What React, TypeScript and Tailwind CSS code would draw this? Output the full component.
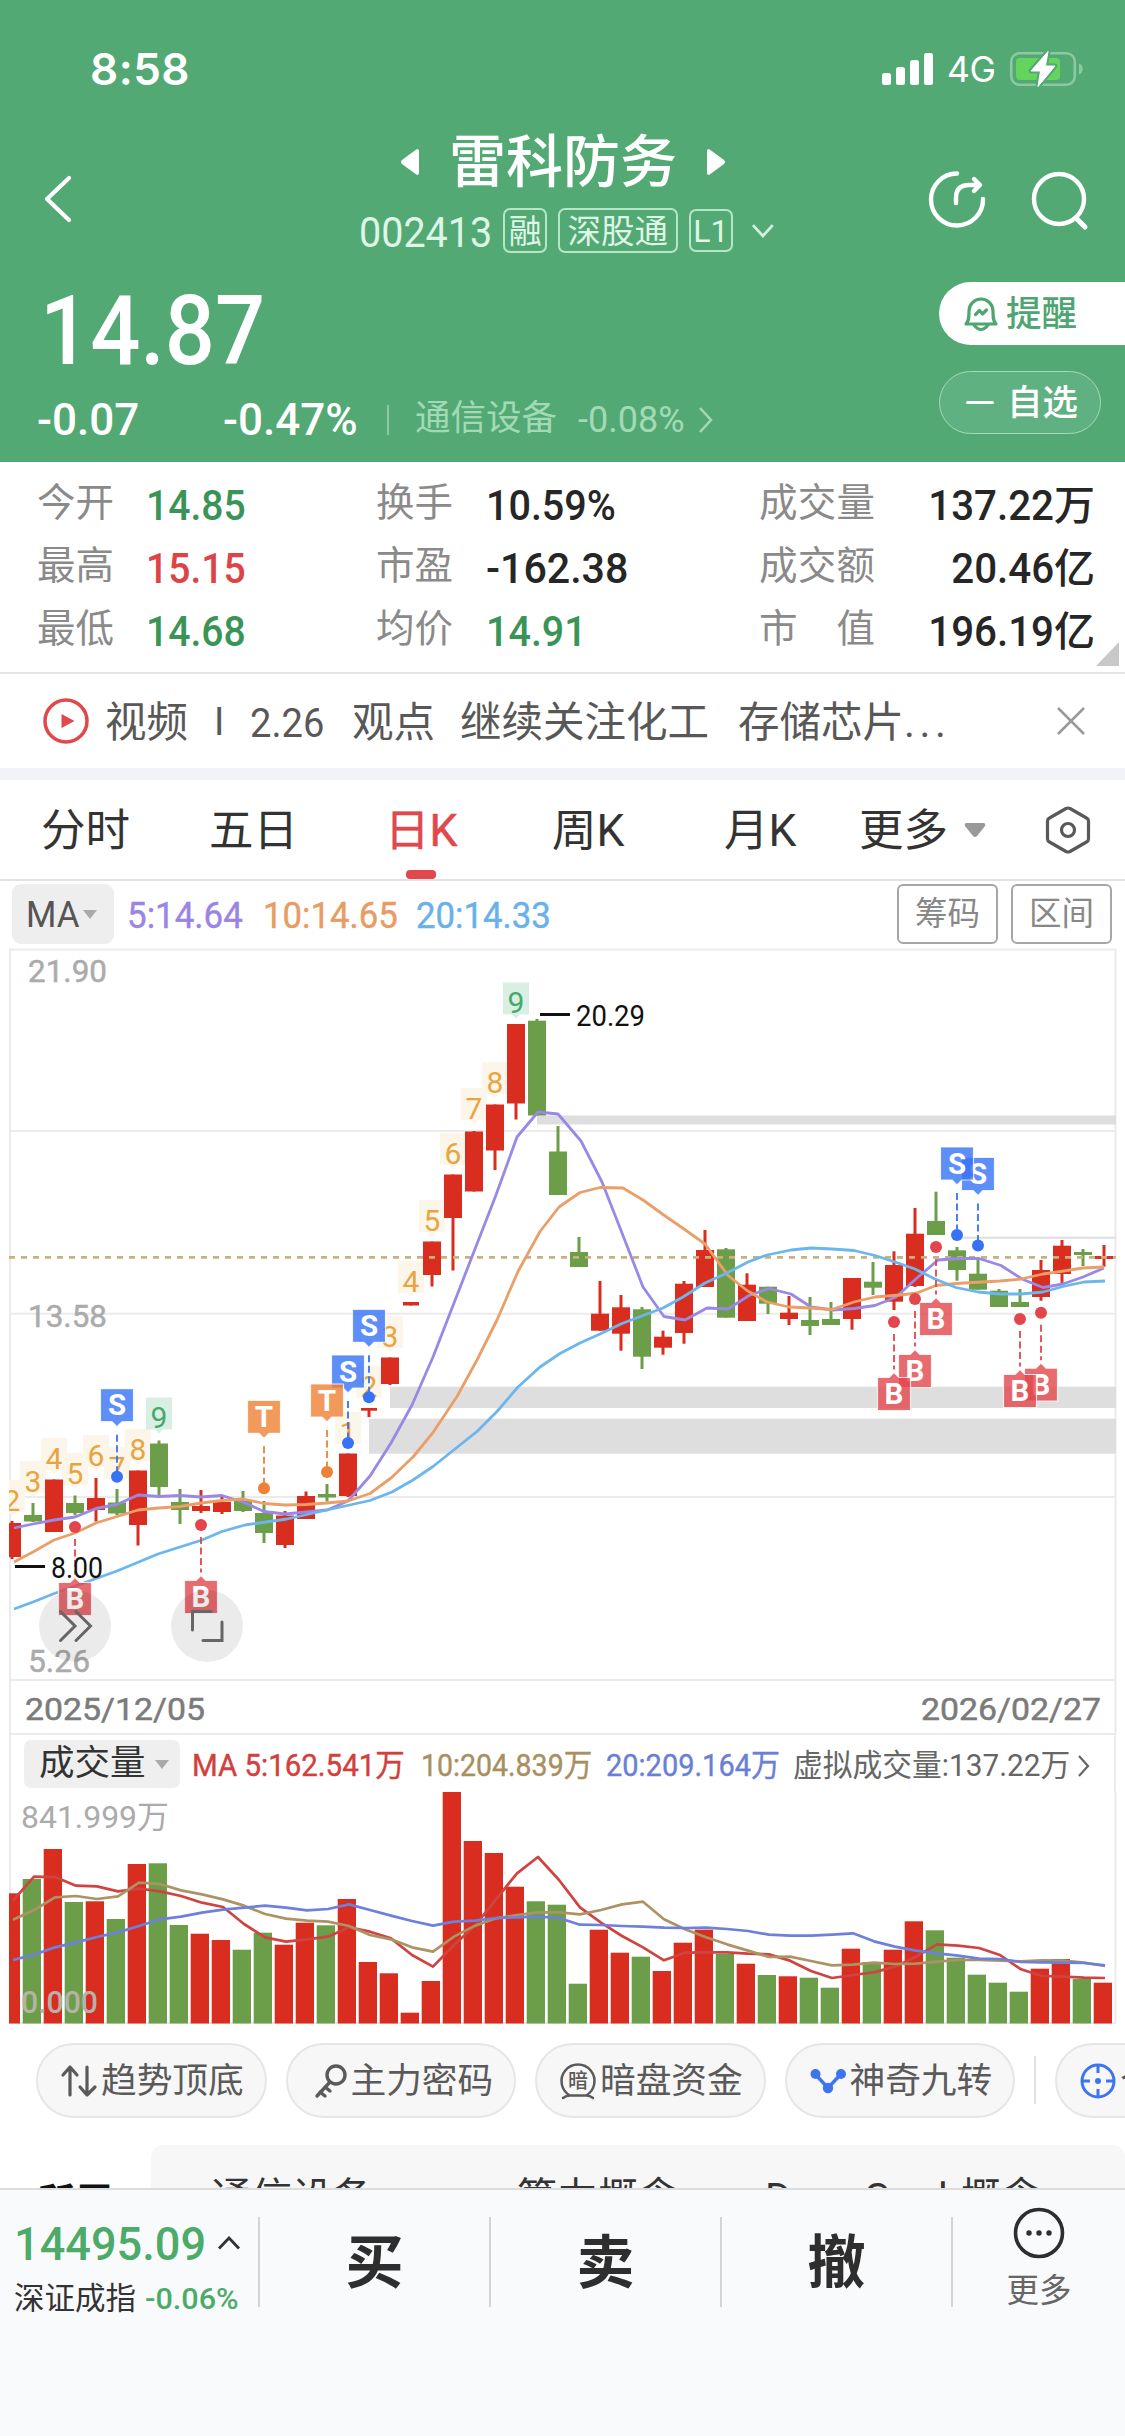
import type { ReactNode } from "react";

// [up, high, bodyTop, bodyBottom, low], y values in chart space
const candles: [number, number, number, number, number][] = [
  [1, 1521, 1523, 1557, 1559], [0, 1503, 1515, 1521.5, 1522], [1, 1479.5, 1479.5, 1532, 1532], [0, 1495.5, 1503, 1513, 1515],
  [1, 1478, 1498, 1510, 1521.5], [0, 1489, 1502.5, 1513.5, 1515], [1, 1470.5, 1470.5, 1525, 1545.5], [0, 1440.5, 1443.5, 1487, 1495],
  [0, 1489, 1502, 1510, 1524], [1, 1490, 1506, 1511, 1513], [1, 1496.5, 1502, 1512, 1514], [0, 1491, 1501, 1511, 1512],
  [0, 1501, 1513, 1533, 1543], [1, 1511, 1515.5, 1545, 1548], [1, 1491.5, 1496, 1519, 1519], [0, 1484, 1494, 1497.5, 1501.5],
  [1, 1453.5, 1453.5, 1496, 1497], [1, 1408, 1408, 1410.7, 1417], [1, 1357.5, 1357.5, 1384, 1385], [1, 1302, 1302, 1305.5, 1305.5],
  [1, 1241.5, 1241.5, 1275, 1286.5], [1, 1174.5, 1174.5, 1218, 1270.5], [1, 1131, 1131.5, 1191.5, 1191.5], [1, 1104.5, 1104.5, 1150.5, 1170],
  [1, 1024, 1024, 1103.5, 1119.5], [0, 1019, 1020.7, 1115.5, 1115.5], [0, 1126, 1151.5, 1195, 1195], [0, 1237, 1252, 1267, 1267],
  [1, 1281, 1313.7, 1330.7, 1330.7], [1, 1295, 1307.3, 1333.7, 1350.7], [0, 1307, 1309.3, 1356.7, 1369], [1, 1330.7, 1336.7, 1347.7, 1354.7],
  [1, 1281, 1283.7, 1333, 1343.7], [1, 1230, 1250, 1287, 1287], [0, 1248, 1249.3, 1317.7, 1317.7], [1, 1273.3, 1284.7, 1321, 1321],
  [0, 1286.7, 1286.7, 1303.7, 1314], [1, 1296, 1312.7, 1319, 1325], [0, 1297, 1320, 1326, 1335], [0, 1302, 1319, 1325, 1325],
  [1, 1278, 1278, 1319, 1329.7], [0, 1262, 1281.7, 1287.7, 1295], [1, 1251.3, 1265, 1301.7, 1310], [1, 1208, 1233.7, 1286, 1287],
  [0, 1191.7, 1221, 1235, 1235], [0, 1247, 1250.3, 1270, 1280.7], [0, 1259, 1273.7, 1289.7, 1289.7], [0, 1289, 1290.7, 1307, 1307],
  [0, 1289, 1302, 1307, 1307], [1, 1260, 1270, 1297, 1300.7], [1, 1240, 1245.7, 1274, 1283], [0, 1249, 1252, 1255, 1266],
  [1, 1245, 1256, 1259, 1266.7],
];

const volumeTops = [
  1893.3, 1879, 1849, 1902, 1901.3, 1919, 1864, 1863.3, 1925, 1933.7, 1940, 1949.7, 1932.7, 1944.7, 1922.7, 1925.3, 1899, 1962,
  1973.3, 2012.7, 1981, 1792, 1841, 1853, 1886.7, 1901.3, 1904.7, 1983.7, 1929.7, 1952.7, 1956.7, 1971, 1942.7, 1929.7, 1954,
  1963.7, 1975, 1976.3, 1977.7, 1987.7, 1948.7, 1962, 1949.7, 1921.3, 1930.3, 1957.7, 1974.7, 1982.7, 1991.7, 1968.7, 1959, 1979, 1982.7,
];

const ma5 = "14,1528 33,1524 54,1520 75,1517 96,1508.5 117,1504.5 138,1495 159,1496.5 180,1495.5 201,1497 222,1495.5 243,1502 264,1511.5 285,1514 306,1512 327,1510 348,1501 370,1476 391,1443 412,1405 433,1357 454,1303 475,1249 496,1195 517,1137 538,1112 558,1114 581,1141 602,1182 622,1233 643,1287 664,1316.5 685,1320 707,1308 728,1309 749,1295.5 769,1288.5 791,1294 811,1307 833,1310 854,1308.5 875,1305.5 896,1297 917,1278 938,1260 959,1258.5 979,1258.5 1001,1265.5 1022,1279 1043,1287.5 1063,1284 1083,1277 1104,1268";
const ma10 = "14,1562 33,1552 54,1540 75,1533 96,1523 117,1516.5 138,1510 159,1508 180,1506.5 201,1503 222,1500.5 243,1499 264,1503.5 285,1505 306,1504.5 327,1503 348,1501 370,1493.5 391,1478 413,1457 433,1432.5 457,1396.5 477,1360 497,1320 518,1271.5 540,1231.5 559,1207 580,1192.5 600,1187.5 623,1188 643,1200 663,1214.5 684,1229 705,1244 728,1275.5 747,1290.5 767,1302 789,1307 810,1308 832,1309.5 854,1302 875,1297 900,1295 917,1293 936,1285.5 956,1283.5 982,1282 1000,1281 1021,1279 1043,1274 1064,1271 1083,1268 1104,1267";
const ma20 = "14,1609 33,1602 53,1594 74,1586.5 117,1571 158,1554 202,1540 222,1531.5 245,1525 287,1519 327,1510 370,1500.5 392,1492 413,1480 433,1466.5 477,1431.5 497,1411.5 518,1387 540,1367 560,1353.5 580,1343 600,1334 622,1323.5 643,1315.5 663,1308 683,1297 705,1283 727,1273 748,1262 767,1255 791,1250 811,1248 832,1249 854,1250.5 875,1255.5 895,1262 915,1269 935,1279 956,1287.5 978,1292 1000,1294 1021,1294 1043,1292 1063,1286.5 1084,1282 1105,1281";

// offsets below y=1660, in thirds of a pixel
const vol5 = [722, 650, 651, 677, 679, 694, 686, 694, 708, 728, 741, 792, 832, 845, 838, 830, 802, 815, 835, 885, 920, 855, 797, 718, 640, 591, 660, 742, 788, 828, 862, 901, 878, 877, 877, 881, 883, 902, 933, 954, 945, 937, 920, 890, 853, 857, 864, 885, 928, 948, 950, 953, 954];
const vol10 = [779, 750, 712, 708, 717, 709, 668, 672, 691, 703, 718, 737, 762, 776, 782, 785, 798, 825, 838, 862, 875, 830, 797, 775, 765, 757, 757, 763, 750, 733, 725, 778, 808, 832, 853, 872, 891, 890, 903, 916, 914, 908, 912, 911, 905, 900, 900, 902, 904, 901, 902, 908, 918];
const vol20 = [900, 884, 862, 847, 831, 817, 798, 778, 770, 758, 749, 743, 737, 743, 751, 747, 733, 750, 767, 783, 797, 785, 782, 774, 772, 770, 774, 794, 795, 798, 800, 803, 804, 803, 807, 813, 824, 827, 827, 824, 820, 844, 860, 872, 880, 887, 896, 897, 906, 907, 908, 909, 916];
const volPoints = (ys: number[]) => ys.map((y, i) => `${13 + i * 21},${1660 + y / 3}`).join(" ");

const counts: [string, number, number][] = [
  ["2", 12, 1480], ["3", 33, 1461], ["4", 54, 1438], ["5", 75, 1453], ["6", 96, 1435], ["7", 117, 1447], ["8", 138, 1429], ["9", 159, 1397.5],
  ["1", 348, 1412], ["2", 369, 1366], ["3", 390, 1316], ["4", 411, 1261], ["5", 432, 1200], ["6", 453, 1133], ["7", 474, 1088], ["8", 495, 1062], ["9", 516, 982.5],
];

const signals: ["S" | "T" | "B", number, number][] = [
  ["B", 1041, 1312.7], ["B", 1020, 1319], ["S", 978, 1245.5], ["S", 957, 1235], ["B", 936, 1247], ["B", 915, 1299], ["B", 894, 1322],
  ["S", 369, 1397.3], ["S", 348, 1443], ["T", 327, 1472], ["T", 264, 1488.3], ["B", 201, 1525], ["S", 117, 1476.7], ["B", 75, 1527],
];
const signalColors = { S: "#3672f6", T: "#ee8133", B: "#e2464c" };

const RED = "#d92d20";
const GREEN = "#6c9e49";

function Num({ children, className = "scale-x-[0.93] font-medium" }: { children: ReactNode; className?: string }) {
  return <span className={`inline-block origin-left whitespace-nowrap ${className}`}>{children}</span>;
}

function Label({ x, y, w, size = 32, fill, weight = 400, children }: { x: number; y: number; w: number; size?: number; fill: string; weight?: number; children: string }) {
  return <text x={x} y={y} textLength={w} lengthAdjust="spacingAndGlyphs" fontSize={size} fill={fill} fontWeight={weight}>{children}</text>;
}

function StatusBar() {
  return (
    <div className="flex h-[138px] items-center pl-[90px] font-['Inter',sans-serif] text-white">
      <span className="w-[792px] text-[44px] font-semibold leading-none tracking-[0.5px]">8:58</span>
      <svg width="52" height="34" viewBox="882 52 52 34" fill="#fff">
        <rect x="882" y="73" width="9" height="12" rx="2.5" />
        <rect x="896" y="67" width="9" height="18" rx="2.5" />
        <rect x="910" y="60" width="9" height="25" rx="2.5" />
        <rect x="924" y="53" width="9" height="32" rx="2.5" />
      </svg>
      <span className="ml-[13px] mt-px w-[62px] text-[35.5px] leading-none tracking-[-0.5px]">4G</span>
      <svg width="76" height="42" viewBox="1008 48 76 42">
        <rect x="1010.2" y="53.2" width="63.6" height="31.6" rx="8.5" fill="none" stroke="#8cc8a1" strokeWidth="2.6" />
        <path d="M1078 63.5c5 1.5 5 9.500 0 11z" fill="#8cc8a1" />
        <rect x="1015" y="58" width="44" height="22" rx="4" fill="#65d45f" />
        <path d="M1047 51.500l-17 19.500h9.500l-2.500 15.500 17-20.500h-9.500z" fill="#fff" stroke="#53a974" strokeWidth="5" strokeLinejoin="round" />
        <path d="M1047 51.500l-17 19.500h9.500l-2.500 15.500 17-20.500h-9.500z" fill="#fff" stroke="#fff" strokeWidth="1" strokeLinejoin="round" />
      </svg>
    </div>
  );
}

function TitleBar() {
  return (
    <div className="flex h-[122px] items-center">
      <div className="w-[345px] pl-[43px]">
        <svg width="30" height="50" viewBox="0 0 30 50" fill="none" stroke="#fff" strokeWidth="4.2" strokeLinecap="round" strokeLinejoin="round"><path d="M26 4L4 25l22 21" /></svg>
      </div>
      <div className="flex h-[122px] w-[445px] flex-col items-center">
        <div className="flex h-[48px] items-center pr-[9px]">
          <svg width="18" height="28" viewBox="0 0 18 28" fill="#fff"><path d="M16 1q2 0 2 2v22q0 2-2 2L1 16q-2-2 0-4z" /></svg>
          <span className="mx-[30px] pt-px text-[57px] font-medium leading-[48px] text-white">雷科防务</span>
          <svg width="18" height="28" viewBox="0 0 18 28" fill="#fff"><path d="M2 1Q0 1 0 3v22q0 2 2 2l15-11q2-2 0-4z" /></svg>
        </div>
        <div className="mt-[22px] flex h-[45px] w-[415px] items-center text-[#dff5e6]">
          <span className="w-[145px] pt-[5px] text-[42px] leading-none"><Num className="-ml-px scale-x-[0.94]">002413</Num></span>
          <span className="flex h-[45px] w-[44px] items-center justify-center rounded-[7px] border-2 border-[#b5e6c6] pt-[2px] text-[33px] leading-none">融</span>
          <span className="ml-[11px] flex h-[45px] w-[121px] items-center justify-center rounded-[7px] border-2 border-[#b5e6c6] pt-[2px] text-[33.5px] leading-none">深股通</span>
          <span className="ml-[11px] flex h-[43px] w-[45px] items-center justify-center rounded-[7px] border-2 border-[#b5e6c6] text-[32px] leading-none">L1</span>
          <svg className="ml-[18px]" width="24" height="16" viewBox="0 0 24 16" fill="none" stroke="#d4f1dd" strokeWidth="2.8"><path d="M2 2l10 11L22 2" /></svg>
        </div>
      </div>
      <svg width="335" height="80" viewBox="790 158 335 80" fill="none" stroke="#fff" strokeWidth="4.4" strokeLinecap="round" strokeLinejoin="round">
        <path d="M957 172.500a26 26 0 1 0 26 25.500" />
        <path d="M956 202v-5q0-13 13-13h10M974 178l6 6-6 6" />
        <circle cx="1059" cy="198" r="25" />
        <path d="M1076 217l9 9" strokeWidth="5" />
      </svg>
    </div>
  );
}

function PriceBlock() {
  return (
    <div className="flex h-[202px] justify-between text-white">
      <div>
        <div className="flex h-[139px] items-center pl-[40px]">
          <Num className="mt-[3px] scale-x-[0.91] text-[97px] font-medium leading-none">14.87</Num>
        </div>
        <div className="flex h-[40px] items-center pl-[37px] pt-px text-[44px] leading-none">
          <span className="w-[186px] font-medium">-0.07</span>
          <span className="w-[164px] font-medium">-0.47%</span>
          <span className="h-[30px] w-[2px] bg-[#8cc8a1]" />
          <span className="ml-[26px] w-[163px] pb-px text-[35.5px] text-[#a3dab6]">通信设备</span>
          <span className="w-[120px] text-[36px] text-[#a3dab6]">-0.08%</span>
          <svg width="16" height="28" viewBox="0 0 16 28" fill="none" stroke="#a3dab6" strokeWidth="2.5"><path d="M2 2l11 12L2 26" /></svg>
        </div>
      </div>
      <div className="w-[186px] pt-[22px] text-[35.5px] font-medium leading-none">
        <div className="flex h-[63px] items-center rounded-l-full bg-white pl-[24px] text-[#4fa571]">
          <svg width="36" height="38" viewBox="0 0 36 38" fill="none" stroke="currentColor" strokeWidth="3.2" strokeLinecap="round" strokeLinejoin="round">
            <path d="M3 29h30c-3-3-3-7-3-13a12 12 0 0 0-24 0c0 6 0 10-3 13z" />
            <path d="M11 30q7 9 14 0M12.500 19.500l4-4 3 3.500 4-4" />
          </svg>
          <span className="ml-[7px] pt-[3px]">提醒</span>
        </div>
        <div className="mt-[26px] flex h-[63px] w-[162px] items-center rounded-full border-[1.5px] border-[#a3dab6] bg-[#60b182] pl-[26px]">
          <span className="h-[3px] w-[28px] rounded bg-white" />
          <span className="ml-[13px] pt-[3px]">自选</span>
        </div>
      </div>
    </div>
  );
}

const stats = [
  { a: "今开", av: "14.85", ac: "text-[#3b9457]", b: "换手", bv: "10.59%", bc: "text-[#262626]", c: ["成", "交", "量"], cv: "137.22", unit: "万" },
  { a: "最高", av: "15.15", ac: "text-[#dd4447]", b: "市盈", bv: "-162.38", bc: "text-[#262626]", c: ["成", "交", "额"], cv: "20.46", unit: "亿", wide: true },
  { a: "最低", av: "14.68", ac: "text-[#3b9457]", b: "均价", bv: "14.91", bc: "text-[#3b9457]", c: ["市", "值"], cv: "196.19", unit: "亿" },
];

function Stats() {
  return (
    <div className="relative h-[212px] border-b-2 border-[#e6e6e6] pt-[11px]">
      {stats.map((row) => (
        <div key={row.a} className="flex h-[63px] items-center pl-[37px] text-[38.5px] leading-none text-[#8a8a8a]">
          <span className="w-[109px] pb-[2px]">{row.a}</span>
          <span className={`w-[230px] pt-[3px] text-[42px] ${row.ac}`}><Num>{row.av}</Num></span>
          <span className="w-[110px] pb-[2px]">{row.b}</span>
          <span className={`w-[273px] pt-[3px] text-[42px] ${row.bc}`}><Num className={row.wide ? "scale-x-[0.98] font-medium" : "scale-x-[0.94] font-medium"}>{row.bv}</Num></span>
          <span className="flex w-[116px] justify-between pb-[2px]">{row.c.map((ch) => <span key={ch}>{ch}</span>)}</span>
          <span className="flex flex-1 items-center justify-end pr-[30px] pt-[3px] text-[42px] text-[#262626]">
            <span className="inline-block origin-right scale-x-[0.96] font-medium">{row.cv}</span>
            <span className="w-[41px] text-[41px] font-medium">{row.unit}</span>
          </span>
        </div>
      ))}
      <svg className="absolute bottom-[6px] right-[6px]" width="23" height="24" viewBox="0 0 23 24"><path d="M23 0v24H0z" fill="#c8c8c8" /></svg>
    </div>
  );
}

function VideoRow() {
  return (
    <div className="flex h-[94px] items-center pl-[43px] text-[41.5px] leading-none text-[#585858]">
      <svg width="46" height="46" viewBox="0 0 46 46" fill="none" stroke="#e0484b" strokeWidth="3.5"><circle cx="23" cy="23" r="21" /><path d="M18.500 16v14l13-7z" fill="#e0484b" stroke="none" /></svg>
      <span className="ml-[16px] w-[109px] pt-[3px]">视频</span>
      <span className="w-[36px] pt-[2px] text-[38px]">I</span>
      <span className="w-[102px] pt-[4px] text-[41px]"><Num className="scale-x-[0.93]">2.26</Num></span>
      <span className="w-[108px] pt-[3px]">观点</span>
      <span className="w-[278px] whitespace-nowrap pt-[3px]">继续关注化工</span>
      <span className="w-[319px] whitespace-nowrap pt-[3px]">存储芯片<span className="tracking-[4.5px]">...</span></span>
      <svg width="28" height="28" viewBox="0 0 28 28" stroke="#999" strokeWidth="2.5"><path d="M1 1l26 26M27 1L1 27" /></svg>
    </div>
  );
}

const tabs = [
  { name: "分时", w: "w-[168px]" },
  { name: "五日", w: "w-[176px]" },
  { name: "日K", w: "w-[167px]", active: true },
  { name: "周K", w: "w-[172px]" },
  { name: "月K", w: "w-[135px]" },
];

function Tabs() {
  return (
    <div className="flex h-[101px] items-center border-b-2 border-[#e2e2e2] pl-[41px] text-[44.5px] leading-none text-[#333]">
      {tabs.map((t) => (
        <span key={t.name} className={`relative pt-[3px] ${t.w} ${t.active ? "text-[#e0484b] [-webkit-text-stroke:0.5px_#e0484b]" : ""}`}>
          {t.name}
          {t.active ? <span className="absolute left-[21px] top-[64px] h-[9px] w-[30px] rounded-[4px] bg-[#e0484b]" /> : null}
        </span>
      ))}
      <span className="w-[105px] pt-[3px]">更多</span>
      <svg width="22" height="14" viewBox="0 0 22 14" fill="#999"><path d="M2 0h18q2 1 1 3l-8 10q-2 2-4 0L1 3Q0 1 2 0z" /></svg>
      <svg className="ml-[59px]" width="46" height="48" viewBox="0 0 46 48" fill="none" stroke="#595959" strokeWidth="3.2" strokeLinejoin="round">
        <path d="M21 2.500q2-1 4 0l16.500 9.500q2 1 2 3v18q0 2-2 3L25 45.500q-2 1-4 0L4.500 36q-2-1-2-3V15q0-2 2-3z" />
        <circle cx="23" cy="24" r="6.5" />
      </svg>
    </div>
  );
}

function MaBar() {
  return (
    <div className="flex h-[67px] pl-[12px] pt-[3px] leading-none">
      <div className="flex h-[60px] w-[102px] items-center rounded-[9px] bg-[#eeeeee] pl-[14px] text-[37px] text-[#555]">
        <span className="inline-block w-[57px] origin-left scale-x-[0.94]">MA</span>
        <svg width="14" height="9" viewBox="0 0 14 9" fill="#aaa"><path d="M0 0h14L7 9z" /></svg>
      </div>
      <div className="flex flex-1 items-center pl-[13px] text-[36px] [-webkit-text-stroke:0.4px_currentColor]">
        <span className="w-[136px] text-[#9b85e4]"><Num className="scale-x-[0.97]">5:14.64</Num></span>
        <span className="w-[153px] text-[#e89c62]"><Num className="scale-x-[0.965]">10:14.65</Num></span>
        <span className="text-[#68b1ea]"><Num className="scale-x-[0.965]">20:14.33</Num></span>
      </div>
      <span className="mr-[13px] flex h-[60px] w-[101px] items-center justify-center rounded-[6px] border-2 border-[#a6a6a6] pt-px text-[32.5px] text-[#888]">筹码</span>
      <span className="mr-[13px] flex h-[60px] w-[101px] items-center justify-center rounded-[6px] border-2 border-[#a6a6a6] pt-px text-[32.5px] text-[#888]">区间</span>
    </div>
  );
}

function CountTag({ n, x, y }: { n: string; x: number; y: number }) {
  const nine = n === "9";
  return (
    <g>
      <path d={`M${x - 13} ${y}h26v32h-9l-4 4-4-4h-9z`} fill={nine ? "#d9efe4" : "#fcf6ea"} />
      <text x={x} y={y + 30.5} textAnchor="middle" fontSize="30" fill={nine ? "#45a86c" : "#e9a440"}>{n}</text>
    </g>
  );
}

function SignalTag({ kind, x, dot }: { kind: "S" | "T" | "B"; x: number; dot: number }) {
  const color = signalColors[kind];
  const below = kind === "B";
  const top = below ? dot + 55.5 : dot - 88;
  const shape = below
    ? `M${x - 16.5} ${top}h11.5l5-5 5 5h11.5v33h-33z`
    : `M${x - 16.5} ${top}h33v33h-11.5l-5 5-5-5h-11.5z`;
  const from = below ? dot + 12 : top + 46;
  const to = below ? top - 8 : dot - 4;
  return (
    <g>
      <line x1={x} x2={x} y1={from} y2={to} stroke={color} strokeWidth="1.8" strokeDasharray="7 3.5" />
      <circle cx={x} cy={dot} r="6" fill={color} />
      <path d={shape} fill={color} fillOpacity="0.8" stroke="#fff" strokeOpacity="0.8" strokeWidth="1.2" strokeLinejoin="round" />
      <text x={x} y={top + 26.5} textAnchor="middle" fontSize="29.5" fontWeight="700" fill="#fff">{kind}</text>
    </g>
  );
}

function KLineChart() {
  return (
    <svg className="block" width="1125" height="787" viewBox="0 948 1125 787">
      <g stroke="#ebebeb" strokeWidth="2">
        <path d="M9 949.500h1107M9 1131h1107M9 1313.700h1107M9 1497h1107M9 1680h1107M9 1734h1107M10 949v786M1115.500 949v786" />
      </g>
      <g fill="#dedede">
        <rect x="537" y="1115.5" width="579" height="9" />
        <rect x="390" y="1386.7" width="726" height="21.3" />
        <rect x="369" y="1418.7" width="747" height="35" />
        <rect x="957" y="1236.7" width="159" height="2" />
      </g>
      <g stroke="#ababab" strokeWidth="0.5">
        <Label x={28} y={982} w={79} fill="#ababab">21.90</Label>
        <Label x={28} y={1327} w={79} fill="#ababab">13.58</Label>
        <Label x={28} y={1672} w={62} fill="#ababab">5.26</Label>
      </g>
      <clipPath id="plot"><rect x="9" y="948" width="1107" height="787" /></clipPath>
      <g clipPath="url(#plot)">
        {counts.map(([n, x, y]) => <CountTag key={x} n={n} x={x} y={y} />)}
        {candles.map(([up, high, top, bottom, low], i) => {
          const x = 12 + i * 21;
          const half = bottom - top < 4 && i < 20 && up ? 8 : 9;
          return (
            <g key={i} fill={up ? RED : GREEN}>
              <rect x={x - 1.5} y={high} width="3" height={low - high} />
              <rect x={x - half} y={top} width={half * 2} height={bottom - top} />
            </g>
          );
        })}
      </g>
      <line x1="9" x2="1116" y1="1257.3" y2="1257.3" stroke="#c9b07c" strokeWidth="2.8" strokeDasharray="6 6" />
      <g fill="none" strokeWidth="2.8" strokeLinejoin="round">
        <polyline points={ma5} stroke="#9a88e6" />
        <polyline points={ma10} stroke="#eb9f68" />
        <polyline points={ma20} stroke="#6cb6ee" />
      </g>
      {signals.map(([kind, x, dot]) => <SignalTag key={x} kind={kind} x={x} dot={dot} />)}
      <path d="M540 1014.500h30M15 1566.500h30" stroke="#111" strokeWidth="3" />
      <Label x={576} y={1026} w={69} size={30} fill="#111">20.29</Label>
      <Label x={51} y={1578} w={52} size={30} fill="#111">8.00</Label>
      <g fill="#000" fillOpacity="0.08">
        <circle cx="75" cy="1626" r="36" />
        <circle cx="207" cy="1626" r="36" />
      </g>
      <path d="M60.500 1611.500l14.500 14.500-14.500 14.500M76 1611.500l14.500 14.500L76 1640.500M211 1611.500h-18.500v18.500M222 1622v18.500h-19" fill="none" stroke="#666" strokeWidth="3" strokeLinecap="round" />
      <g stroke="#7b7b7b" strokeWidth="0.5">
        <Label x={25} y={1720} w={180} fill="#7b7b7b">2025/12/05</Label>
        <Label x={921} y={1720} w={180} fill="#7b7b7b">2026/02/27</Label>
      </g>
    </svg>
  );
}

function VolumeHeader() {
  return (
    <div className="mx-[9px] flex h-[56px] border-x-2 border-[#ebebeb] pl-[13px] pt-[5px] leading-none">
      <div className="flex h-[48px] w-[156px] items-center rounded-[7px] bg-[#efefef] pl-[15px] text-[35.5px] text-[#333]">
        <span className="w-[116px]">成交量</span>
        <svg width="14" height="9" viewBox="0 0 14 9" fill="#aaa"><path d="M0 0h14L7 9z" /></svg>
      </div>
      <div className="flex items-center whitespace-nowrap pl-[12px] text-[31px]">
        <span className="w-[229px] text-[#d23f3c] [-webkit-text-stroke:0.4px_currentColor]"><Num className="scale-x-[0.95]">MA 5:162.541万</Num></span>
        <span className="w-[185px] text-[#a98f60] [-webkit-text-stroke:0.4px_currentColor]"><Num className="scale-x-[0.92]">10:204.839万</Num></span>
        <span className="w-[187px] text-[#6a7fd6] [-webkit-text-stroke:0.4px_currentColor]"><Num className="scale-x-[0.935]">20:209.164万</Num></span>
        <span className="w-[285px] text-[#666]"><Num className="scale-x-[0.96]">虚拟成交量:137.22万</Num></span>
        <svg width="12" height="22" viewBox="0 0 12 22" fill="none" stroke="#666" strokeWidth="2.2"><path d="M1 1l9 10-9 10" /></svg>
      </div>
    </div>
  );
}

function VolumeChart() {
  return (
    <svg className="block" width="1125" height="234" viewBox="0 1791 1125 234">
      <path d="M10 1791v232M1115.500 1791v232M9 2023h1107" stroke="#ebebeb" strokeWidth="2" />
      <Label x={21} y={1828} w={148} fill="#ababab">841.999万</Label>
      <clipPath id="vol"><rect x="9" y="1791" width="1107" height="234" /></clipPath>
      <g clipPath="url(#vol)">
        {volumeTops.map((top, i) => <rect key={i} x={1.7 + i * 21} y={top} width="18.3" height={2023.5 - top} fill={candles[i][0] ? RED : GREEN} />)}
      </g>
      <g fill="none" strokeWidth="2.7" strokeLinejoin="round">
        <polyline points={volPoints(vol5)} stroke="#cf4440" />
        <polyline points={volPoints(vol10)} stroke="#ad9363" />
        <polyline points={volPoints(vol20)} stroke="#6c80dc" />
      </g>
      <Label x={21} y={2013} w={77} fill="#b5b2a8" weight={500}>0.000</Label>
    </svg>
  );
}

function Pill({ icon, children }: { icon: ReactNode; children: ReactNode }) {
  return (
    <div className="flex h-[75px] w-[230.5px] shrink-0 items-center rounded-full border-2 border-[#e6e6e6] bg-[#f7f7f7] pl-[22px] text-[35.7px] leading-none text-[#5a5a5a]">
      {icon}
      <span className="whitespace-nowrap pl-[3px] pt-[2px]">{children}</span>
    </div>
  );
}

function Pills() {
  return (
    <div className="flex h-[93px] items-start gap-[19px] overflow-hidden pl-[36px] pt-[18px]">
      <Pill icon={<svg width="38" height="36" viewBox="0 0 38 36" fill="none" stroke="#5a5a5a" strokeWidth="3.2" strokeLinecap="round" strokeLinejoin="round"><path d="M10 32V5M3 12l7-8 7 8M27 4v27M20 24l7 8 8-8" /></svg>}>趋势顶底</Pill>
      <Pill icon={<svg width="38" height="38" viewBox="0 0 38 38" fill="none" stroke="#5a5a5a" strokeWidth="3.4" strokeLinecap="round" strokeLinejoin="round"><circle cx="26" cy="13" r="9" /><path d="M20 20L7 34M15 25l5 4M10 30l5 4" /></svg>}>主力密码</Pill>
      <Pill
        icon={
          <svg width="38" height="38" viewBox="0 0 38 38" fill="none" stroke="#5a5a5a" strokeWidth="2.5" strokeLinecap="round">
            <path d="M11 33.500a16.500 16.500 0 1 1 16 0M4 36q3-2.500 7-2.500h16q4 0 7 2.500" />
            <text x="19" y="26" textAnchor="middle" fontSize="20" fontWeight="500" fill="#5a5a5a" stroke="none">暗</text>
          </svg>
        }
      >暗盘资金</Pill>
      <Pill icon={<svg width="38" height="26" viewBox="0 0 38 26" fill="#3d74f0"><path d="M6 6l13 14L32 6" fill="none" stroke="#3d74f0" strokeWidth="3.5" /><circle cx="6.5" cy="6" r="5" /><circle cx="32" cy="6" r="5" /><circle cx="19" cy="20" r="5.2" /></svg>}>神奇九转</Pill>
      <span className="mt-[13px] h-[48px] w-[2px] shrink-0 bg-[#e2e2e2]" />
      <Pill icon={<svg width="38" height="38" viewBox="0 0 38 38" fill="none" stroke="#3d74f0" strokeWidth="3"><circle cx="19" cy="19" r="16" /><path d="M19 3v8M19 27v8M3 19h8M27 19h8" /><circle cx="19" cy="19" r="3" fill="#3d74f0" stroke="none" /></svg>}>个股诊断</Pill>
    </div>
  );
}

function Concepts() {
  return (
    <div className="mt-[27px] flex h-[43px] overflow-hidden">
      <span className="w-[151px] pl-[37px] pt-[37px] text-[38px] font-bold leading-[40px] text-[#111]">所属</span>
      <div className="flex h-[120px] flex-1 whitespace-nowrap rounded-t-[12px] bg-[#f7f7f7] pl-[60px] pt-[32px] text-[40.5px] leading-[42px] text-[#333]">
        <span className="w-[306px]">通信设备</span>
        <span className="w-[248px]">算力概念</span>
        <span><span className="tracking-[2px]">DeepSeek</span>概念</span>
      </div>
    </div>
  );
}

function BottomBar() {
  return (
    <div className="flex h-[249px] border-t-2 border-[#dcdcdc] bg-[#f9fafc] leading-none">
      <div className="w-[258px] pl-[14px] pt-[30px]">
        <div className="flex h-[46px] items-center text-[47px] text-[#4dab69]">
          <span className="w-[203px]"><Num className="scale-x-[0.96] font-medium">14495.09</Num></span>
          <svg width="24" height="14" viewBox="0 0 24 14" fill="none" stroke="#333" strokeWidth="2.8"><path d="M2 12.500L12 2l10 10.500" /></svg>
        </div>
        <div className="mt-[13px] flex h-[40px] items-center text-[30.5px] text-[#333]">
          <span className="w-[131px]">深证成指</span>
          <span className="text-[30px] text-[#4dab69]"><Num className="scale-x-[1.02] font-medium">-0.06%</Num></span>
        </div>
      </div>
      {["买", "卖", "撤"].map((name) => (
        <div key={name} className="flex w-[231px] pt-[27px]">
          <span className="h-[90px] w-[2px] bg-[#d4d4d6]" />
          <span className="flex h-[90px] flex-1 items-center justify-center pt-[2px] text-[58px] font-bold text-[#2e2e2e]">{name}</span>
        </div>
      ))}
      <span className="mt-[27px] h-[90px] w-[2px] bg-[#d4d4d6]" />
      <div className="flex flex-1 flex-col items-center pt-[16px] text-[32.5px] text-[#666]">
        <svg width="56" height="54" viewBox="0 0 56 54" fill="none" stroke="#2e2e2e" strokeWidth="3.6">
          <circle cx="28" cy="27" r="23.5" />
          <g fill="#2e2e2e" stroke="none"><circle cx="18" cy="27" r="2.7" /><circle cx="28" cy="27" r="2.7" /><circle cx="38" cy="27" r="2.7" /></g>
        </svg>
        <span className="mt-[15px]">更多</span>
      </div>
    </div>
  );
}

export default function App() {
  return (
    <div className="h-[2436px] w-[1125px] overflow-hidden bg-white font-['Roboto','Noto_Sans_CJK_SC',sans-serif]">
      <header className="h-[462px] bg-[#53a974]">
        <StatusBar />
        <TitleBar />
        <PriceBlock />
      </header>
      <Stats />
      <VideoRow />
      <div className="h-[12px] bg-[#f1f3f6]" />
      <Tabs />
      <MaBar />
      <KLineChart />
      <VolumeHeader />
      <VolumeChart />
      <Pills />
      <Concepts />
      <BottomBar />
    </div>
  );
}
